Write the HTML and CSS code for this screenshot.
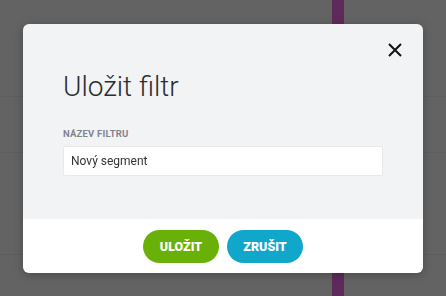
FILE: index.html
```html
<!DOCTYPE html>
<html lang="cs">
<head>
<meta charset="utf-8">
<title>Uložit filtr</title>
<link rel="stylesheet" href="styles.css">
</head>
<body>
<div class="page">
  <div class="side side-left">
    <div class="row r1"></div>
    <div class="row r2"></div>
    <div class="row r3"></div>
    <div class="row r4"></div>
  </div>
  <div class="accent"></div>
  <div class="side side-right">
    <div class="row r1"></div>
    <div class="row r2"></div>
    <div class="row r3"></div>
    <div class="row r4"></div>
  </div>
</div>
<div class="overlay">
  <div class="dialog">
    <div class="dialog-body">
      <button class="close" aria-label="Zavřít">
        <svg width="14" height="14" viewBox="0 0 14 14"><path d="M1 1 L13 13 M13 1 L1 13" stroke="#111" stroke-width="2" fill="none"/></svg>
      </button>
      <h1 class="title">Uložit filtr</h1>
      <label class="label" for="name">NÁZEV FILTRU</label>
      <input id="name" class="input" type="text" value="Nový segment">
    </div>
    <div class="dialog-footer">
      <button class="btn btn-save">ULOŽIT</button>
      <button class="btn btn-cancel">ZRUŠIT</button>
    </div>
  </div>
</div>
</body>
</html>
```
FILE: styles.css
```css
html, body {
  margin: 0;
  padding: 0;
  width: 446px;
  height: 296px;
  overflow: hidden;
  font-family: Roboto, "Liberation Sans", sans-serif;
}
.page {
  display: flex;
  height: 296px;
  background: #636363;
}
.side {
  display: flex;
  flex-direction: column;
}
.side-left { width: 332px; }
.side-right { flex: 1; }
.accent {
  width: 12px;
  background: #5e2a5b;
}
.row { border-bottom: 1px solid #5d5d5d; }
.r1 { height: 96px; }
.r2 { height: 55px; }
.r3 { height: 101px; }
.r4 { flex: 1; border-bottom: none; }

.overlay {
  position: fixed;
  inset: 0;
  display: flex;
  align-items: center;
  justify-content: center;
}
.dialog {
  width: 400px;
  height: 249px;
  margin-top: 1px;
  border-radius: 6px;
  overflow: hidden;
  display: flex;
  flex-direction: column;
  box-shadow: 0 2px 10px rgba(0,0,0,0.25);
}
.dialog-body {
  position: relative;
  flex: 1;
  background: #f2f3f5;
  padding: 0 40px;
  display: flex;
  flex-direction: column;
}
.close {
  position: absolute;
  top: 19px;
  right: 21px;
  width: 14px;
  height: 14px;
  padding: 0;
  border: 0;
  background: none;
  display: flex;
}
.title {
  margin: 46px 0 0;
  font-size: 28px;
  font-weight: 300;
  line-height: 34px;
  color: #2b2d30;
}
.label {
  margin-top: 24px;
  font-size: 9.5px;
  font-weight: 700;
  line-height: 12px;
  letter-spacing: 0.2px;
  color: #7f858d;
}
.input {
  margin-top: 6px;
  height: 30px;
  box-sizing: border-box;
  width: 320px;
  border: 1px solid #e8e9eb;
  border-radius: 2px;
  background: #fff;
  padding: 0 7px;
  font-family: Roboto, "Liberation Sans", sans-serif;
  font-size: 12px;
  color: #333;
  outline: none;
}
.dialog-footer {
  height: 54px;
  background: #fff;
  display: flex;
  align-items: center;
  justify-content: center;
  gap: 8px;
}
.btn {
  width: 76px;
  height: 33px;
  border: 0;
  border-radius: 17px;
  color: #fff;
  font-family: Roboto, "Liberation Sans", sans-serif;
  font-size: 12.5px;
  font-weight: 900;
  padding: 0;
  margin-top: 1px;
}
.btn-save { background: #69b008; }
.btn-cancel { background: #11a7ca; }
```
